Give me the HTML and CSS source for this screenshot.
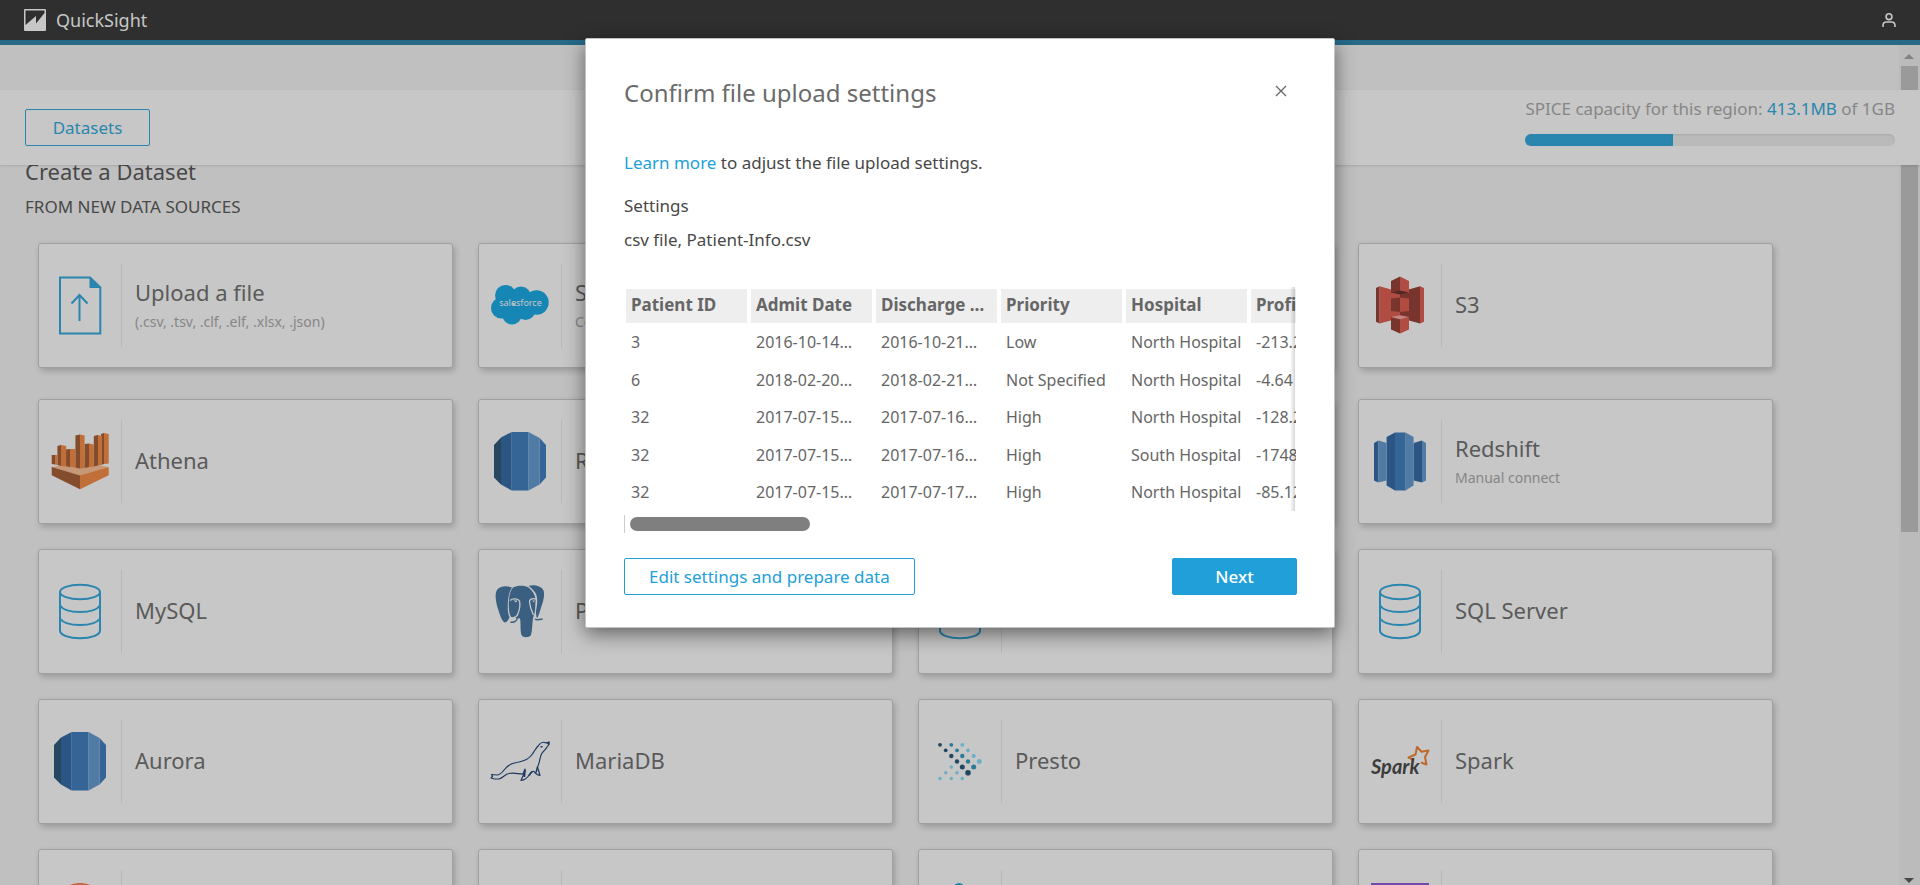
FILE: index.html
```html
<!DOCTYPE html>
<html lang="en">
<head>
<meta charset="utf-8">
<title>QuickSight</title>
<link rel="stylesheet" href="styles.css">
</head>
<body>
<svg class="sprite" aria-hidden="true">
  <symbol id="db" viewBox="0 0 60 60">
    <g fill="none" stroke="#2a86ae" stroke-width="2">
      <ellipse cx="30" cy="11" rx="20" ry="7.3"/>
      <path d="M10 11V49.500C10 54 19 57.300 30 57.300S50 54 50 49.500V11M10 24.500C13 29 21 31 30 31S47 29 50 24.500M10 37.500C13 42 21 44 30 44S47 42 50 37.500"/>
    </g>
  </symbol>
  <symbol id="rds" viewBox="0 0 60 60">
    <path fill="#25475f" d="M4 14 11 6.500V53.500L4 46.500z"/>
    <path fill="#2b5583" d="M11 6.500 21.700 1V59.500L11 53.500z"/>
    <path fill="#356597" d="M21.700 1H38.500V59.500H21.700zM49.600 7 56 14V46.500L49.600 53.500z"/>
    <path fill="#4f7ba4" d="M38.500 1 49.600 7V53.500L38.500 59.500z"/>
  </symbol>
</svg>

<div class="page">
  <header class="topbar">
    <div class="brand">
      <svg class="brand-mark" viewBox="0 0 22 22" aria-hidden="true"><rect width="22" height="22" rx="1" fill="#c7c7c7"/><path fill="#2f2f2f" d="M1.500 1.500H20.500V4L12 14.500V7L1.500 16z"/></svg>
      <span>QuickSight</span>
    </div>
    <button class="user" type="button" aria-label="Account">
      <svg viewBox="0 0 14 14" fill="none" stroke="#c7c7c7" stroke-width="1.6" aria-hidden="true"><circle cx="7" cy="3.700" r="2.900"/><path d="M1 14V12.500Q1 9 4.500 9H9.500Q13 9 13 12.500V14"/></svg>
    </button>
  </header>

  <div class="stage">
    <div class="toolbar">
      <button class="btn btn-dim" type="button">Datasets</button>
      <div class="spice">
        <div class="spice-label">SPICE capacity for this region: <span class="spice-used">413.1MB</span> of 1GB</div>
        <div class="meter" role="progressbar" aria-label="SPICE capacity" aria-valuenow="40"><div class="meter-fill" style="width:40%"></div></div>
      </div>
    </div>

    <main class="content">
      <h1>Create a Dataset</h1>
      <h2>From new data sources</h2>
      <div class="grid">
        <button class="card" type="button">
          <span class="icon"><svg viewBox="0 0 60 60" aria-hidden="true"><path fill="none" stroke="#2a86ae" stroke-width="2" d="M10 2.500H40L50.300 12.500V58.500H10zM29.500 46V20M21.500 28.500 29.500 20 37.500 28.500"/><path fill="#2a86ae" d="M39.500 2.500 50.500 13H39.500z"/></svg></span>
          <span class="label"><span class="name">Upload a file</span><span class="note">(.csv, .tsv, .clf, .elf, .xlsx, .json)</span></span>
        </button>
        <button class="card" type="button">
          <span class="icon"><svg viewBox="0 0 60 60" aria-hidden="true"><g fill="#1686b4"><circle cx="15.500" cy="20.500" r="10.500"/><circle cx="31" cy="21.500" r="10"/><circle cx="46.500" cy="27.500" r="12.200"/><circle cx="11.500" cy="33" r="10.500"/><circle cx="22" cy="39.500" r="10"/><circle cx="35.500" cy="35" r="10"/></g><text class="sf-text" x="30.500" y="31" text-anchor="middle">salesforce</text></svg></span>
          <span class="label"><span class="name">Salesforce</span><span class="note">Connect to Salesforce</span></span>
        </button>
        <button class="card" type="button" aria-label="S3 Analytics"><span class="icon"></span></button>
        <button class="card" type="button">
          <span class="icon"><svg viewBox="0 0 60 60" aria-hidden="true">
            <path fill="#78352d" d="M6 13 9.600 11.200V48.500L6 46.700zM30 17 50 11.200V48.500L30 43z"/>
            <path fill="#b04c42" d="M9.600 11.200 30 17V43L9.600 48.500zM50 11.200 54 13V46.700L50 48.500z"/>
            <path fill="#78352d" d="M21 6 30 1.500V17L21 18zM21 23.500 30 22.500V37L21 36zM21 42 30 44V58.500L21 54.500z"/>
            <path fill="#b04c42" d="M30 1.500 39 6V18L30 16zM30 22.500 39 23.500V36L30 37zM30 44 39 42V54.500L30 58.500z"/>
            <path fill="#532824" d="M21 17.500 30 15.500 39 17.500 30 19.500z"/><path fill="#c58580" d="M21 42 30 40.300 39 42 30 44.200z"/>
          </svg></span>
          <span class="label"><span class="name">S3</span></span>
        </button>
      </div>

      <div class="grid">
        <button class="card" type="button">
          <span class="icon"><svg viewBox="0 0 60 60" aria-hidden="true">
            <path fill="#c79878" d="M1.700 36 30 31 58.700 36 30 45z"/>
            <path fill="#834c2c" d="M1.700 36 30 44.500V58.200L1.700 44.300zM1.700 24H5V33.500L1.700 33zM7.400 15 11 14V35L7.400 34zM15 18.500 20 18V36L15 35zM25.400 4.500 30 3.500V37.500L25.400 36.500zM34.600 13 39 12.500V36L34.600 37zM43.800 5 48 4V34.500L43.800 35.500zM51 3 54 2V33L51 34z"/>
            <path fill="#bf6f37" d="M58.700 36 30 44.500V58.200L58.700 44.300zM5 24H7.400V34L5 33.500zM11 14 16.200 15V35.500L11 35zM20 18H25.400V36.500L20 36zM30 3.500 34.600 4.500V37L30 37.500zM39 12.500 43.800 13.500V35.500L39 36zM48 4 52 5V34L48 34.500zM54 2 58.700 3V32.500L54 33z"/>
          </svg></span>
          <span class="label"><span class="name">Athena</span></span>
        </button>
        <button class="card" type="button"><span class="icon"><svg aria-hidden="true"><use href="#rds"/></svg></span><span class="label"><span class="name">RDS</span></span></button>
        <button class="card" type="button" aria-label="Redshift, auto-discovered"><span class="icon"></span></button>
        <button class="card" type="button">
          <span class="icon"><svg viewBox="0 0 60 60" aria-hidden="true">
            <path fill="#2b5583" d="M4 12 8.500 9.500V51.500L4 49.500zM16.600 6 25 1.500V59.500L16.600 54.500zM43.600 12 52 9.500V51.500L43.600 49.500z"/>
            <path fill="#4f7ba4" d="M8.500 9.500 16.600 12V49.500L8.500 51.500zM35.500 1.500 43.600 6V54.500L35.500 59.500zM52 9.500 56 12V49.500L52 51.500z"/>
            <path fill="#356597" d="M25 1.500H35.500V59.500H25z"/>
          </svg></span>
          <span class="label"><span class="name">Redshift</span><span class="note">Manual connect</span></span>
        </button>

        <button class="card" type="button"><span class="icon"><svg aria-hidden="true"><use href="#db"/></svg></span><span class="label"><span class="name">MySQL</span></span></button>
        <button class="card" type="button">
          <span class="icon"><svg viewBox="0 0 60 60" aria-hidden="true">
            <path fill="#3b5f80" d="M22 6.500C17 4.500 10 4.500 7 9 4 14 6.500 24 9 31 10.500 36 13 41.500 15 41.500 17 41.500 19 38 19.500 36 17.500 32 17.500 26 18 20 18.500 14 20 9 22 6.500z"/>
            <path fill="#3b5f80" d="M23 6.500C28 4 35 4.500 38.500 6.500 43 10 46.500 16 45.500 21 45 27 45.500 32 43 37 42 43 42.500 49 41 54 39 57 33 57 31.500 54 30 49 31 42 30 37.500L21.500 36.500C18.500 32 18.500 25 19 19 19.500 13 20.500 9 23 6.500z"/>
            <path fill="#3b5f80" d="M38.500 5C43 3.500 51 4.500 53.500 9.500 55.500 15 52 24 50 30 49 33 48 36 47 37.500 46 34 45.500 31 46.500 27 48 20 47.500 14 44 10 42 7.500 40 6 38.500 5z"/>
            <g fill="none" stroke="#c7c7c7" stroke-width="1.300"><path d="M20 19.500C23 17 28 17.500 29.500 20 30.500 25 29.500 29 28 32.500 27 36 24 37 21 37M46 18C42 17 39 18.500 39.500 21 40 25 41 29 43.500 34"/></g>
            <path fill="none" stroke="#3b5f80" stroke-width="1.500" d="M20.500 41C24 42 27 40 27.500 36.500M45 38C47 39.500 50 38.500 52.600 38"/>
            <path fill="#c7c7c7" d="M23.500 19.500H27.500L26 21.500zM42.500 19.500H45L43.500 21.500z"/>
          </svg></span>
          <span class="label"><span class="name">PostgreSQL</span></span>
        </button>
        <button class="card" type="button" aria-label="Oracle"><span class="icon"><svg aria-hidden="true"><use href="#db"/></svg></span></button>
        <button class="card" type="button"><span class="icon"><svg aria-hidden="true"><use href="#db"/></svg></span><span class="label"><span class="name">SQL Server</span></span></button>

        <button class="card" type="button"><span class="icon"><svg aria-hidden="true"><use href="#rds"/></svg></span><span class="label"><span class="name">Aurora</span></span></button>
        <button class="card" type="button">
          <span class="icon"><svg viewBox="0 0 60 60" aria-hidden="true">
            <path fill="none" stroke="#1d3a63" stroke-width="1.200" stroke-linejoin="round" d="M59 11 56 12C53 10.500 50 12 48.500 14.500 45.500 17.500 44.500 20 42 23.500 39 28 34 30 29 31 22 32 17 35 14.500 38.500 12 42 9 44 6.500 44L1.500 43.500 2.500 45.500 1 47 4.500 48 9 48C13 47 15 43 19 42.500 24 41.500 28 43 33 43.200L35 38C35.500 42 33 44 31 49.500 35 49 38 46 39.500 43.500 40.500 42 42.500 40 44 40.500 46 43 47 44.500 50 44.500L49 41 47.500 36C50 31 49.500 27 51.500 23 53 20 56 18.500 57 16L59 13.500z"/>
            <path fill="#1d3a63" d="M56 11.500 59.500 10.500 59 14.500zM50.500 15H52.500V16.500H50.500z"/>
            <path fill="none" stroke="#1d3a63" stroke-width="1.500" d="M35 39 34.500 46M42 40.500 39 44.500M47.500 36 46 41.500"/>
          </svg></span>
          <span class="label"><span class="name">MariaDB</span></span>
        </button>
        <button class="card" type="button">
          <span class="icon"><svg viewBox="0 0 60 60" aria-hidden="true">
            <g fill="#1f4763"><circle cx="10" cy="13.800" r="1.900"/><circle cx="15.700" cy="19.300" r="1.900"/><circle cx="21.300" cy="25" r="2.200"/><circle cx="27" cy="30.500" r="2.200"/><circle cx="32.300" cy="36" r="2.500"/><circle cx="38" cy="41.800" r="2.800"/></g>
            <g fill="#2a7b97"><circle cx="21.300" cy="13.800" r="1.900"/><circle cx="27" cy="19.300" r="1.900"/><circle cx="32.300" cy="25" r="2.200"/><circle cx="38" cy="30.500" r="2.200"/><circle cx="43.700" cy="36" r="2.500"/></g>
            <g fill="#69afc6"><circle cx="32.300" cy="13.800" r="1.900"/><circle cx="38" cy="19.300" r="1.900"/><circle cx="43.700" cy="25" r="2.100"/><circle cx="49.300" cy="30.500" r="2.400"/><circle cx="21.300" cy="36" r="1.700"/><circle cx="15.700" cy="41.800" r="1.700"/><circle cx="27" cy="41.800" r="1.700"/><circle cx="10" cy="47.500" r="1.700"/><circle cx="21.300" cy="47.500" r="1.700"/><circle cx="32.300" cy="47.500" r="1.700"/></g>
          </svg></span>
          <span class="label"><span class="name">Presto</span></span>
        </button>
        <button class="card" type="button">
          <span class="icon"><svg viewBox="0 0 60 60" aria-hidden="true"><path fill="none" stroke="#bd6a2b" stroke-width="2" stroke-linejoin="round" d="M44 29 38.500 26.500 45.500 23.500 47 16 51.500 20.800 58.500 19.500 55 26 56.500 33.500 51 31.500"/><text class="spark-text" x="1" y="42.500">Spark</text></svg></span>
          <span class="label"><span class="name">Spark</span></span>
        </button>

        <button class="card" type="button" aria-label="Teradata"><span class="icon"><svg viewBox="0 0 60 60" aria-hidden="true"><circle cx="30" cy="30" r="28" fill="#c8623c"/></svg></span></button>
        <button class="card" type="button" aria-label="Snowflake"><span class="icon"></span></button>
        <button class="card" type="button" aria-label="AWS IoT"><span class="icon"><svg viewBox="0 0 60 60" aria-hidden="true"><circle cx="29" cy="7.500" r="5.500" fill="#1686a4"/></svg></span></button>
        <button class="card" type="button" aria-label="GitHub"><span class="icon"><svg viewBox="0 0 60 60" aria-hidden="true"><rect x="1" y="2" width="58" height="58" fill="#7249ac"/></svg></span></button>
      </div>
    </main>

    <div class="scrollbar" aria-hidden="true"><span class="arrow-up"></span><span class="thumb"></span><span class="arrow-down"></span></div>
  </div>
</div>

<div class="modal-layer">
  <section class="modal" role="dialog" aria-labelledby="modal-title">
    <div class="modal-head">
      <h2 id="modal-title">Confirm file upload settings</h2>
      <button class="close" type="button" aria-label="Close"><svg viewBox="0 0 12 12" fill="none" stroke="#666" stroke-width="1.300" aria-hidden="true"><path d="M1 1 11 11M11 1 1 11"/></svg></button>
    </div>
    <p class="lead"><a href="#">Learn more</a> to adjust the file upload settings.</p>
    <p class="settings-title">Settings</p>
    <p class="settings-file">csv file, Patient-Info.csv</p>
    <div class="preview">
      <table>
        <thead><tr><th>Patient ID</th><th>Admit Date</th><th>Discharge …</th><th>Priority</th><th>Hospital</th><th>Profit</th></tr></thead>
        <tbody>
          <tr><td>3</td><td>2016-10-14…</td><td>2016-10-21…</td><td>Low</td><td>North Hospital</td><td>-213.2</td></tr>
          <tr><td>6</td><td>2018-02-20…</td><td>2018-02-21…</td><td>Not Specified</td><td>North Hospital</td><td>-4.64</td></tr>
          <tr><td>32</td><td>2017-07-15…</td><td>2017-07-16…</td><td>High</td><td>North Hospital</td><td>-128.2</td></tr>
          <tr><td>32</td><td>2017-07-15…</td><td>2017-07-16…</td><td>High</td><td>South Hospital</td><td>-1748</td></tr>
          <tr><td>32</td><td>2017-07-15…</td><td>2017-07-17…</td><td>High</td><td>North Hospital</td><td>-85.12</td></tr>
        </tbody>
      </table>
    </div>
    <div class="hscroll" aria-hidden="true"><span class="hthumb"></span></div>
    <div class="actions">
      <button class="btn btn-edit" type="button">Edit settings and prepare data</button>
      <button class="btn btn-primary" type="button">Next</button>
    </div>
  </section>
</div>
</body>
</html>
```
FILE: styles.css
```css
* { box-sizing: border-box; }
body {
  margin: 0;
  background: #c0c0c0;
  color: #484848;
  font-family: "Noto Sans", "Open Sans", sans-serif;
  font-size: 17px;
  line-height: 24px;
}
button { font: inherit; color: inherit; cursor: pointer; }
h1, h2, p { margin: 0; font-weight: 400; }
.sprite { display: block; width: 0; height: 0; }

.page { height: 100vh; overflow: hidden; display: flex; flex-direction: column; }
.topbar {
  flex: none;
  display: flex;
  align-items: center;
  justify-content: space-between;
  height: 45px;
  padding: 0 24px;
  background: #2f2f2f;
  border-bottom: 5px solid #256a87;
}
.brand { display: flex; align-items: center; gap: 10px; color: #c7c7c7; font-size: 18px; }
.brand-mark { width: 22px; height: 22px; }
.user { display: flex; padding: 0; border: 0; background: none; }
.user svg { width: 14px; height: 14px; }

.stage { position: relative; flex: 1; min-height: 0; display: flex; overflow: hidden; }
.toolbar {
  position: absolute;
  top: 45px;
  left: 0;
  right: 0;
  display: flex;
  justify-content: space-between;
  align-items: flex-start;
  height: 75px;
  padding: 0 25px;
  background: #c7c7c7;
  box-shadow: 0 1px 2px rgba(0, 0, 0, .12);
}
.btn {
  height: 37px;
  padding: 0 24px;
  border: 1px solid #219fd9;
  border-radius: 2px;
  background: #fff;
  color: #219fd9;
}
.btn-dim { width: 125px; margin-top: 19px; border-color: #2a86ae; background: none; color: #2a86ae; }
.spice { padding-top: 7px; color: #868686; }
.spice-used { color: #2a86ae; }
.meter {
  height: 12px;
  margin-top: 13px;
  border-radius: 6px;
  overflow: hidden;
  background: #bababa;
  box-shadow: inset 0 1px 2px rgba(0, 0, 0, .1);
}
.meter-fill { height: 100%; background: #2a86ae; }

.content { flex: 1; min-width: 0; padding: 111px 0 0 38px; }
.content h1 { margin-left: -13px; font-size: 22px; line-height: 30px; }
.content h2 { margin: 9px 0 24px -13px; font-size: 17px; line-height: 24px; text-transform: uppercase; }
.grid { display: grid; grid-template-columns: repeat(auto-fill, 415px); gap: 25px; margin-bottom: 31px; }
.card {
  display: flex;
  align-items: center;
  height: 125px;
  padding: 0;
  border: 1px solid #a0a0a0;
  border-radius: 3px;
  background: #c7c7c7;
  box-shadow: 2px 3px 6px rgba(0, 0, 0, .2);
  text-align: left;
}
.icon {
  flex: none;
  display: flex;
  align-items: flex-start;
  justify-content: center;
  width: 83px;
  height: 83px;
  padding-top: 11px;
  border-right: 1px solid #b8b8b8;
}
.icon svg { width: 60px; height: 60px; }
.label { display: flex; flex-direction: column; padding-left: 13px; }
.name { color: #5a5a5a; font-size: 22px; line-height: 30px; }
.name:only-child { padding-bottom: 4px; }
.note { margin-top: 3px; color: #868686; font-size: 14px; line-height: 24px; }
.sf-text { fill: #c7c7c7; font-size: 9px; }
.spark-text { fill: #3c3c3c; font: italic 700 20px Lato, sans-serif; }

.scrollbar {
  flex: none;
  display: flex;
  flex-direction: column;
  align-items: center;
  width: 21px;
  padding: 9px 1px 2px 0;
  background: #bbb;
}
.arrow-up { border: 5px solid transparent; border-top: 0; border-bottom-color: #828282; }
.arrow-down { margin-top: auto; border: 5px solid transparent; border-bottom: 0; border-top-color: #484848; }
.thumb { width: 17px; height: 466px; margin-top: 7px; background: #9a9a9a; }

.modal-layer { position: absolute; inset: 0; display: flex; justify-content: center; align-items: flex-start; padding-top: 38px; overflow: hidden; }
.modal {
  width: 750px;
  padding: 37px 37px 32px 38px;
  border: 1px solid #c4c4c4;
  border-radius: 2px;
  background: #fff;
  box-shadow: 0 6px 20px rgba(0, 0, 0, .5);
}
.modal-head { display: flex; justify-content: space-between; align-items: flex-start; }
.modal-head h2 { color: #6b6b6b; font-size: 24px; line-height: 34px; }
.close { display: flex; padding: 9px 10px; border: 0; background: none; }
.close svg { width: 12px; height: 12px; }
.lead { margin-top: 41px; }
.lead a { color: #219fd9; text-decoration: none; }
.settings-title { margin-top: 19px; }
.settings-file { margin-top: 10px; }
.preview { position: relative; width: 672px; margin-top: 35px; padding-top: 2px; overflow: hidden; }
.preview::after {
  content: "";
  position: absolute;
  top: 0;
  right: 1px;
  bottom: 0;
  width: 5px;
  background: linear-gradient(to right, rgba(0, 0, 0, 0), rgba(0, 0, 0, .16));
}
table { width: 750px; table-layout: fixed; border-collapse: separate; border-spacing: 0; color: #666; }
th, td { padding: 0 0 0 5px; border: 0 solid #fff; border-width: 0 2px; text-align: left; white-space: nowrap; line-height: 24px; }
th { height: 34px; padding-bottom: 2px; background: #eee; font-size: 17px; font-weight: 700; }
td { height: 38px; font-size: 16px; }
tbody tr:nth-child(even) td { height: 37px; }
.hscroll { display: flex; align-items: center; height: 18px; margin-top: 4px; padding-left: 5px; border-left: 1px solid #ccc; }
.hthumb { width: 180px; height: 14px; border-radius: 7px; background: #7f7f7f; }
.actions { display: flex; justify-content: space-between; margin-top: 25px; }
.btn-edit { min-width: 290px; }
.btn-primary { width: 125px; background: #219fd9; color: #fff; font-weight: 500; }
```
